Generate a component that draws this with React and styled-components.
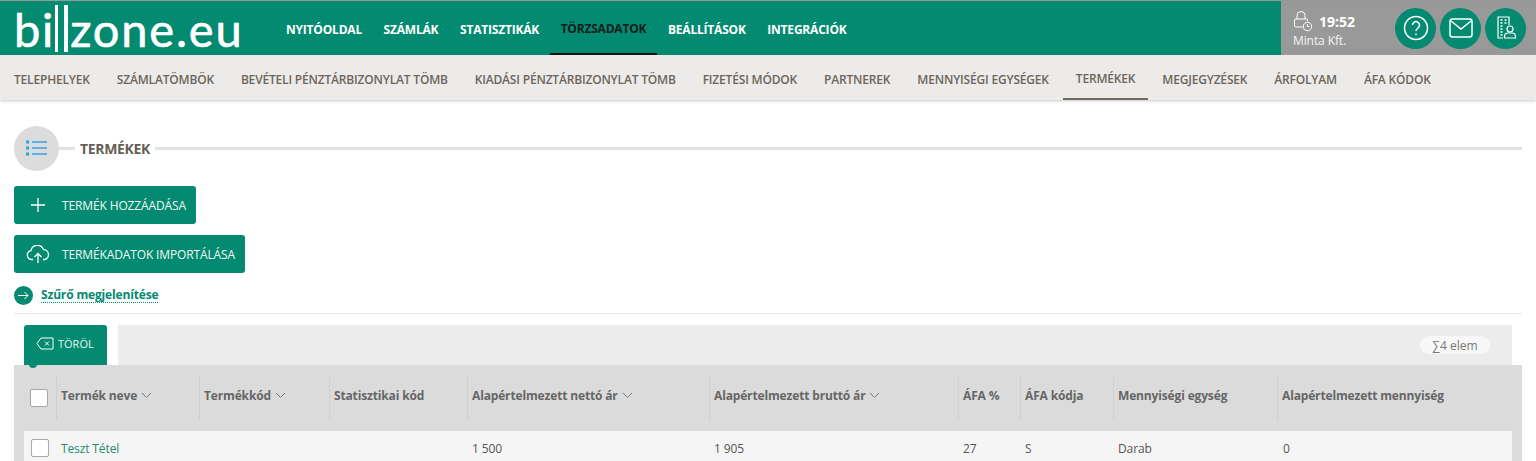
import React from "react";
import styled, { createGlobalStyle } from "styled-components";

const GlobalStyle = createGlobalStyle`
  html, body { margin: 0; padding: 0; background: #fff; overflow: hidden; }
  body { font-family: "Open Sans", "Liberation Sans", sans-serif; color: #5c5c5c; }
  * { box-sizing: border-box; }
`;

const GREEN = "#038a70";
const COLS = "32px 143px 130px 138px 242px 249px 62px 93px 164px 235px";

const Page = styled.div`
  width: 1536px;
  height: 461px;
  overflow: hidden;
`;

const Header = styled.header`
  height: 54px;
  margin-top: 1px;
  background: ${GREEN};
  display: flex;
  box-shadow: 0 -1px 0 #8f9a97;
`;

const Logo = styled.div`
  width: 286px;
  padding: 1px 0 0 14px;
  display: flex;
  align-items: center;
  color: #fff;
  font-family: Lato, sans-serif;
  font-size: 47px;
  line-height: 50px;
  letter-spacing: 1.8px;
  -webkit-text-stroke: 0.6px #fff;
`;

const LogoBars = styled.span`
  width: 13px;
  height: 47px;
  margin: 0 2px 0 0;
  border-left: 3px solid #fff;
  border-right: 4px solid #fff;
`;

const MainNav = styled.nav`
  display: flex;
  gap: 21.6px;
  flex: 1;
  letter-spacing: -0.2px;
`;

const MainLink = styled.a`
  height: 54px;
  padding: 2px 0 0;
  display: flex;
  align-items: center;
  font-size: 12px;
  font-weight: 700;
  color: #fff;
`;

const ActiveMainLink = styled(MainLink)`
  padding: 2px 11px 0;
  margin: 0 -11px 0 -11px;
  color: #10201c;
  border-bottom: 2px solid #111;
`;

const UserPanel = styled.div`
  width: 255px;
  background: #999;
  display: flex;
  align-items: center;
  padding-left: 12px;
`;

const Session = styled.div`
  width: 102px;
  padding-top: 3px;
  color: #fff;
`;

const Clock = styled.div`
  display: flex;
  align-items: center;
  gap: 6px;
  height: 22px;
  padding-bottom: 1px;
  font-size: 14px;
  font-weight: 700;
`;

const Company = styled.div`
  font-size: 12px;
  line-height: 16px;
  letter-spacing: -0.1px;
  color: #f4f4f4;
`;

const RoundButton = styled.div`
  width: 41px;
  height: 41px;
  margin-right: 4px;
  border-radius: 50%;
  background: ${GREEN};
  display: flex;
  align-items: center;
  justify-content: center;
`;

const SubNav = styled.nav`
  height: 45px;
  background: #ecebe9;
  display: flex;
  gap: 25px;
  padding-left: 13px;
  letter-spacing: -0.18px;
  box-shadow: 0 1px 3px rgba(0, 0, 0, 0.22);
`;

const SubLink = styled.a`
  height: 45px;
  padding: 3px 1px 0;
  display: flex;
  align-items: center;
  font-size: 12px;
  font-weight: 600;
  color: #6b655c;
`;

const ActiveSubLink = styled(SubLink)`
  padding: 3px 13px 0;
  margin: 0 -12px;
  border-bottom: 2px solid #6f6a60;
`;

const Content = styled.main`
  padding: 25px 14px 0;
`;

const TitleRow = styled.div`
  display: flex;
  align-items: center;
  height: 46px;
`;

const TitleCircle = styled.div`
  width: 45px;
  height: 45px;
  border-radius: 50%;
  background: #dcdcdc;
  display: flex;
  align-items: center;
  justify-content: center;
`;

const TitleRule = styled.div`
  height: 3px;
  background: #e2e2e2;
  flex: ${(p) => (p.$grow ? 1 : "0 0 16px")};
`;

const Title = styled.h1`
  margin: 0;
  padding: 0 5px;
  font-size: 14px;
  font-weight: 700;
  letter-spacing: -0.35px;
  color: #655f57;
`;

const ActionButton = styled.button`
  display: flex;
  align-items: center;
  height: 38px;
  margin-top: ${(p) => p.$top}px;
  padding: 0 10px 0 0;
  border: 0;
  border-radius: 3px;
  background: ${GREEN};
  color: #f1f8f6;
  font-family: inherit;
  font-size: 12px;
  font-weight: 500;
  letter-spacing: -0.13px;
`;

const ButtonIcon = styled.span`
  width: 48px;
  display: flex;
  justify-content: center;
`;

const FilterRow = styled.div`
  display: flex;
  align-items: center;
  gap: 8px;
  height: 19px;
  margin-top: 13px;
`;

const FilterIcon = styled.span`
  width: 19px;
  height: 19px;
  border-radius: 50%;
  background: ${GREEN};
  display: flex;
  align-items: center;
  justify-content: center;
`;

const FilterLink = styled.a`
  font-size: 12px;
  font-weight: 700;
  letter-spacing: -0.16px;
  color: ${GREEN};
  border-bottom: 1px dotted ${GREEN};
  line-height: 14px;
`;

const Divider = styled.hr`
  margin: 8px 0 11px;
  border: 0;
  height: 1px;
  background: #e6e6e6;
`;

const Toolbar = styled.div`
  display: flex;
  height: 40px;
  margin: 0 10px;
  gap: 11px;
`;

const DeleteTab = styled.div`
  position: relative;
  width: 83px;
  display: flex;
  align-items: center;
  gap: 4px;
  padding: 0 0 4px 12px;
  background: ${GREEN};
  border-radius: 3px 3px 0 0;
  color: #e9f5f2;
  font-size: 11px;
  font-weight: 400;
  &::after {
    content: "";
    position: absolute;
    left: 5px;
    bottom: -3px;
    width: 8px;
    height: 8px;
    border-radius: 50%;
    background: ${GREEN};
  }
`;

const ToolbarFill = styled.div`
  flex: 1;
  background: #ececec;
  display: flex;
  align-items: center;
  justify-content: flex-end;
  padding-right: 22px;
`;

const CountPill = styled.div`
  width: 70px;
  height: 18px;
  border-radius: 9px;
  background: #f7f7f7;
  display: flex;
  align-items: center;
  justify-content: center;
  font-size: 12px;
  color: #777;
`;

const TableWrap = styled.div`
  background: #dbdbdb;
  padding: 0 10px;
  height: 100px;
`;

const HeadRow = styled.div`
  display: grid;
  grid-template-columns: ${COLS};
  height: 66px;
  align-items: center;
`;

const HeadCell = styled.div`
  height: 45px;
  display: flex;
  align-items: center;
  gap: 4px;
  padding-left: 4px;
  padding-bottom: 5px;
  border-left: 1px solid #d0d0d0;
  font-size: 12px;
  font-weight: 700;
  letter-spacing: -0.15px;
  color: #666;
  white-space: nowrap;
`;

const CheckCell = styled.div`
  display: flex;
  align-items: center;
`;

const BodyRow = styled.div`
  display: grid;
  grid-template-columns: ${COLS};
  height: 34px;
  align-items: center;
  background: #f5f5f5;
`;

const BodyCell = styled.div`
  padding-left: ${(p) => p.$pad ?? 5}px;
  font-size: 12px;
  letter-spacing: -0.12px;
  color: ${(p) => (p.$link ? "#1f8a70" : "#555")};
  white-space: nowrap;
`;

const Checkbox = styled.span`
  display: block;
  width: 18px;
  height: 18px;
  margin-left: ${(p) => p.$left}px;
  background: #fff;
  border: 1.5px solid #a8a8a8;
  border-radius: 2px;
`;

const Chevron = () => (
  <svg width="11" height="7" viewBox="0 0 11 7" fill="none" stroke="#777" strokeWidth="1">
    <path d="M1 1l4.5 4.5L10 1" />
  </svg>
);

const mainLinks = ["NYITÓOLDAL", "SZÁMLÁK", "STATISZTIKÁK", "TÖRZSADATOK", "BEÁLLÍTÁSOK", "INTEGRÁCIÓK"];
const subLinks = [
  "TELEPHELYEK",
  "SZÁMLATÖMBÖK",
  "BEVÉTELI PÉNZTÁRBIZONYLAT TÖMB",
  "KIADÁSI PÉNZTÁRBIZONYLAT TÖMB",
  "FIZETÉSI MÓDOK",
  "PARTNEREK",
  "MENNYISÉGI EGYSÉGEK",
  "TERMÉKEK",
  "MEGJEGYZÉSEK",
  "ÁRFOLYAM",
  "ÁFA KÓDOK",
];
const heads = [
  ["Termék neve", true],
  ["Termékkód", true],
  ["Statisztikai kód", false],
  ["Alapértelmezett nettó ár", true],
  ["Alapértelmezett bruttó ár", true],
  ["ÁFA %", false],
  ["ÁFA kódja", false],
  ["Mennyiségi egység", false],
  ["Alapértelmezett mennyiség", false],
];

export default function App() {
  return (
    <Page>
      <GlobalStyle />
      <Header>
        <Logo>
          bi<LogoBars />zone.eu
        </Logo>
        <MainNav>
          {mainLinks.map((l) =>
            l === "TÖRZSADATOK" ? (
              <ActiveMainLink key={l}>{l}</ActiveMainLink>
            ) : (
              <MainLink key={l}>{l}</MainLink>
            )
          )}
        </MainNav>
        <UserPanel>
          <Session>
            <Clock>
              <svg width="20" height="22" viewBox="0 0 20 22" fill="none" stroke="#fff" strokeWidth="1">
                <path d="M4 9V5.500a4 4 0 0 1 8 0V9" />
                <path d="M9.500 17H2.500a1 1 0 0 1-1-1V10a1 1 0 0 1 1-1h11a1 1 0 0 1 1 1v1" />
                <circle cx="14.500" cy="16.500" r="4.200" />
                <path d="M14.500 14v2.500h2" />
              </svg>
              19:52
            </Clock>
            <Company>Minta Kft.</Company>
          </Session>
          <RoundButton>
            <svg width="26" height="26" viewBox="0 0 26 26" fill="none" stroke="#fff" strokeWidth="1.500">
              <circle cx="13" cy="13" r="11.500" />
              <path d="M9.500 10a3.500 3.500 0 1 1 5.500 3c-1.300.9-2 1.500-2 3" />
              <path d="M13 18.500v1.500" />
            </svg>
          </RoundButton>
          <RoundButton>
            <svg width="24" height="20" viewBox="0 0 24 20" fill="none" stroke="#fff" strokeWidth="1.500">
              <rect x="1" y="1" width="22" height="18" rx="2.500" />
              <path d="M2 3l10 8 10-8" />
            </svg>
          </RoundButton>
          <RoundButton>
            <svg width="22" height="24" viewBox="0 0 22 24" fill="none" stroke="#fff" strokeWidth="1.200">
              <path d="M8 22H3V1h11v8" />
              <path d="M5.500 4h2M9.500 4h2M5.500 7h2M9.500 7h2M5.500 10h2M5.500 13h2M5.500 16h2M5.500 19h2" strokeWidth="1.500" />
              <circle cx="15" cy="13" r="3" />
              <path d="M9.500 22v-1.500a3.500 3.500 0 0 1 3.500-3.500h4a3.500 3.500 0 0 1 3.500 3.500V22z" />
            </svg>
          </RoundButton>
        </UserPanel>
      </Header>

      <SubNav>
        {subLinks.map((l) =>
          l === "TERMÉKEK" ? (
            <ActiveSubLink key={l}>{l}</ActiveSubLink>
          ) : (
            <SubLink key={l}>{l}</SubLink>
          )
        )}
      </SubNav>

      <Content>
        <TitleRow>
          <TitleCircle>
            <svg width="22" height="16" viewBox="0 0 22 16" fill="none" stroke="#2fa4e7" strokeWidth="1.700">
              <circle cx="1.500" cy="2" r="1" fill="#2fa4e7" />
              <circle cx="1.500" cy="8" r="1" fill="#2fa4e7" />
              <circle cx="1.500" cy="14" r="1" fill="#2fa4e7" />
              <path d="M6 2h15M6 8h15M6 14h15" />
            </svg>
          </TitleCircle>
          <TitleRule />
          <Title>TERMÉKEK</Title>
          <TitleRule $grow />
        </TitleRow>

        <ActionButton $top={15}>
          <ButtonIcon>
            <svg width="16" height="16" viewBox="0 0 16 16" stroke="#fff" strokeWidth="1.300">
              <path d="M8 1v14M1 8h14" />
            </svg>
          </ButtonIcon>
          TERMÉK HOZZÁADÁSA
        </ActionButton>
        <ActionButton $top={11}>
          <ButtonIcon>
            <svg width="24" height="19" viewBox="0 0 24 19" fill="none" stroke="#fff" strokeWidth="1.300">
              <path d="M7 14.500H5.500a4.500 4.500 0 0 1-.5-8.900 6.500 6.500 0 0 1 12.500-1 5 5 0 0 1 1 9.900H17" />
              <path d="M12 18V9M8.500 12L12 8.500l3.500 3.500" />
            </svg>
          </ButtonIcon>
          TERMÉKADATOK IMPORTÁLÁSA
        </ActionButton>

        <FilterRow>
          <FilterIcon>
            <svg width="11" height="9" viewBox="0 0 11 9" fill="none" stroke="#fff" strokeWidth="1">
              <path d="M0 4.500h10M6.500 1L10 4.500 6.500 8" />
            </svg>
          </FilterIcon>
          <FilterLink>Szűrő megjelenítése</FilterLink>
        </FilterRow>

        <Divider />

        <Toolbar>
          <DeleteTab>
            <svg width="18" height="13" viewBox="0 0 18 13" fill="none" stroke="#fff" strokeWidth="1">
              <path d="M5 1h12v11H5L1 6.500z" />
              <path d="M9 4.500l4 4M13 4.500l-4 4" />
            </svg>
            TÖRÖL
          </DeleteTab>
          <ToolbarFill>
            <CountPill>∑4 elem</CountPill>
          </ToolbarFill>
        </Toolbar>

        <TableWrap>
          <HeadRow>
            <CheckCell><Checkbox $left={6} /></CheckCell>
            {heads.map(([t, sort]) => (
              <HeadCell key={t}>
                {t}
                {sort && <Chevron />}
              </HeadCell>
            ))}
          </HeadRow>
          <BodyRow>
            <CheckCell><Checkbox $left={7} /></CheckCell>
            <BodyCell $link>Teszt Tétel</BodyCell>
            <BodyCell />
            <BodyCell />
            <BodyCell>1 500</BodyCell>
            <BodyCell>1 905</BodyCell>
            <BodyCell>27</BodyCell>
            <BodyCell>S</BodyCell>
            <BodyCell>Darab</BodyCell>
            <BodyCell $pad={6}>0</BodyCell>
          </BodyRow>
        </TableWrap>
      </Content>
    </Page>
  );
}
